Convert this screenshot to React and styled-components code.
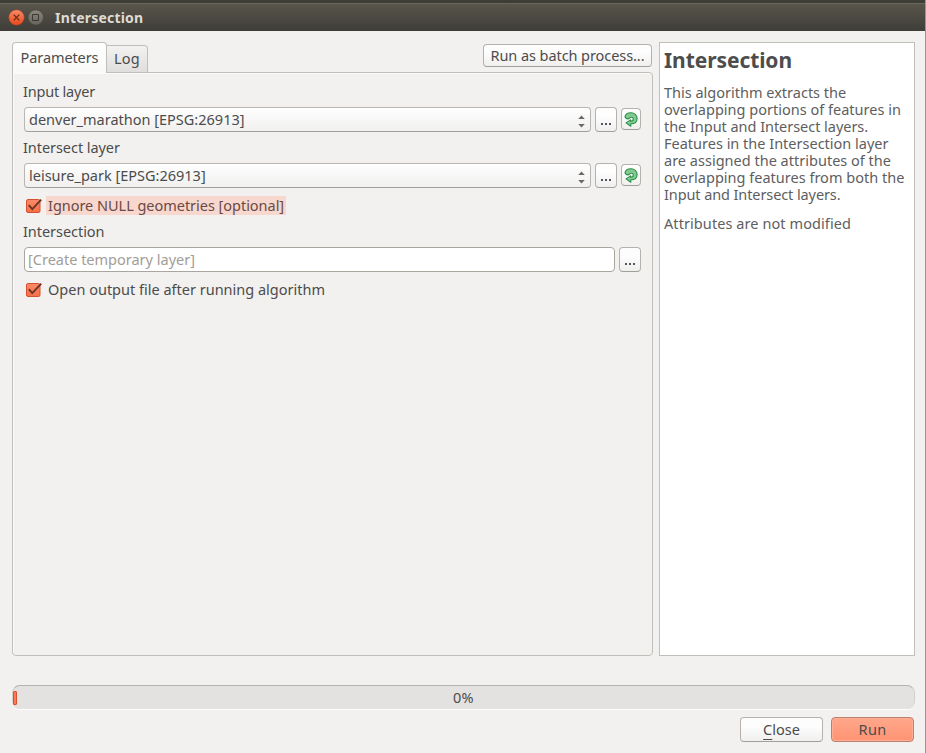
import React from 'react';
import styled, { createGlobalStyle, css } from 'styled-components';

const Global = createGlobalStyle`
  * { box-sizing: border-box; }
  html, body, #root { margin: 0; height: 100%; }
  body {
    overflow: hidden;
    background: #f2f1ef;
    color: #4c4c4c;
    font: 14.5px/20px "Noto Sans", sans-serif;
  }
  p, h2 { margin: 0; }
`;

const Window = styled.div`
  width: 926px;
  height: 753px;
  display: flex;
  flex-direction: column;
  border-right: 1px solid #99958f;
`;

const TitleBar = styled.header`
  height: 31px;
  flex: none;
  display: flex;
  align-items: center;
  padding: 1px 0 0 8px;
  gap: 3px;
  border-top: 3px solid #3d3f37;
  box-shadow: inset 0 1px #6a685c;
  background: linear-gradient(#5a564c, #3e3d38);
  color: #dfdbd2;
`;

const Title = styled.span`
  margin: 0 0 0 7px;
  font-size: 14px;
  font-weight: 700;
  letter-spacing: 0.2px;
`;

const WindowIcon = styled.svg`
  width: 17px;
  height: 17px;
`;

const Body = styled.main`
  flex: 1;
  display: flex;
  flex-direction: column;
  padding: 11px 10px 11px 12px;
`;

const Columns = styled.div`
  height: 614px;
  display: grid;
  grid-template-columns: 641px 256px;
  gap: 6px;
`;

const FormColumn = styled.section`
  display: flex;
  flex-direction: column;
`;

const TabBar = styled.div`
  height: 30px;
  display: flex;
  align-items: flex-end;
`;

const Tab = styled.button`
  width: ${(p) => (p.$active ? 95 : 41)}px;
  height: ${(p) => (p.$active ? 31 : 27)}px;
  padding: 0 0 3px;
  margin-bottom: ${(p) => (p.$active ? -1 : 0)}px;
  position: relative;
  border: 1px solid #c0beba;
  border-bottom: 0;
  border-left-width: ${(p) => (p.$active ? 1 : 0)}px;
  border-radius: ${(p) => (p.$active ? '4px 4px 0 0' : '0 4px 0 0')};
  background: ${(p) => (p.$active ? 'linear-gradient(#fefefe, #f9f9f8)' : 'linear-gradient(#f3f2f1, #e0dedc)')};
  color: inherit;
  font: inherit;
  letter-spacing: ${(p) => (p.$active ? -0.1 : 0.3)}px;
`;

const Button = styled.button`
  width: ${(p) => p.$width}px;
  height: ${(p) => p.$height || 25}px;
  flex: none;
  display: flex;
  align-items: center;
  justify-content: center;
  padding: 0 0 2px;
  margin: ${(p) => p.$margin || 0};
  border: 1px solid #b5b2ae;
  border-bottom-color: #a19f9b;
  border-radius: 4px;
  background: linear-gradient(#fdfdfd 0 35%, #f0efee);
  color: inherit;
  font: inherit;
  letter-spacing: ${(p) => p.$spacing || 0}px;
  ${(p) => p.$primary && css`
    border-color: #b8826f;
    background: linear-gradient(#ffa78b, #ff9373);
    box-shadow: inset 0 0 0 1px #ffad94;
  `}
`;

const IterateButton = styled(Button)`
  padding: 0;
`;

const Mnemonic = styled.span`
  text-decoration: underline;
  text-underline-offset: 4px;
  text-decoration-thickness: 1px;
`;

const Panel = styled.div`
  flex: 1;
  display: flex;
  flex-direction: column;
  padding: 8px 11px 0;
  border: 1px solid #c1bfb9;
  border-radius: 0 4px 4px 4px;
  box-shadow: inset 1px 1px #fbfbfa;
`;

const Label = styled.label`
  height: 26px;
  margin-left: -1px;
  letter-spacing: ${(p) => p.$spacing || 0}px;
`;

const FieldRow = styled.div`
  display: flex;
  gap: 4px;
  height: 25px;
  margin-bottom: ${(p) => p.$after ?? 5}px;
`;

const fieldBox = css`
  flex: 1;
  display: flex;
  align-items: center;
  border-radius: 4px;
`;

const Combo = styled.div`
  ${fieldBox}
  justify-content: space-between;
  padding: 0 4px 2px 4px;
  border: 1px solid #b9b6b2;
  border-bottom-color: #a19f9b;
  background: linear-gradient(#fefefe, #f1f0ef);
`;

const LineEdit = styled.div`
  ${fieldBox}
  padding: 0 3px 2px;
  border: 1px solid #a9a6a0;
  background: #fff;
  color: #a19d98;
`;

const ArrowIcon = styled.svg`
  width: 9px;
  height: 16px;
  margin-top: 5px;
`;

const Dots = styled.span`
  display: flex;
  gap: 2px;
  padding-top: 11px;
  &::before, &::after { content: ''; }
  &::before, &::after, i {
    width: 2px;
    height: 2px;
    background: #55565d;
  }
  i { display: block; }
`;

const CheckRow = styled.label`
  height: 19px;
  display: flex;
  align-items: center;
  gap: 4px;
  margin-bottom: 6px;
`;

const CheckText = styled.span`
  height: 19px;
  padding: 0 2px 0 2px;
  line-height: 19px;
  letter-spacing: ${(p) => (p.$highlight ? -0.03 : 0)}px;
  background: ${(p) => (p.$highlight ? '#f7d7ce' : 'none')};
  color: ${(p) => (p.$highlight ? '#6b4a44' : 'inherit')};
`;

const Help = styled.aside`
  padding: 5px 4px;
  border: 1px solid #c1bfb9;
  background: #fff;
  color: #5e5e60;
  line-height: 17px;
`;

const HelpTitle = styled.h2`
  margin-bottom: 12px;
  color: #4d4d4d;
  font-size: 21px;
  line-height: 24px;
  letter-spacing: -0.08px;
`;

const HelpLine = styled.span`
  display: block;
  white-space: nowrap;
  letter-spacing: ${(p) => p.$spacing || 0}px;
`;

const HelpNote = styled.p`
  margin-top: 12px;
  letter-spacing: 0.08px;
`;

const Progress = styled.div`
  height: 24px;
  flex: none;
  display: grid;
  grid-template-columns: 5px 1fr 5px;
  align-items: center;
  margin-top: 29px;
  border-top: 1px solid #b5b3af;
  border-left: 1px solid #d2d0cd;
  border-right: 1px solid #d2d0cd;
  border-radius: 8px;
  background: #e3e2e0;
  box-shadow: 0 1px #fdfdfd;
  text-align: center;
  letter-spacing: 0.4px;
`;

const ProgressText = styled.span`
  padding-bottom: 2px;
`;

const ProgressChunk = styled.div`
  width: 4px;
  height: 14px;
  margin-top: 1px;
  border: 1px solid #d8512f;
  border-radius: 1px;
  background: #fb7a55;
`;

const Footer = styled.footer`
  display: flex;
  justify-content: flex-end;
  gap: 8px;
  margin: 8px 1px 0 0;
`;

function CloseGlyph() {
  return (
    <WindowIcon viewBox="0 0 17 17">
      <defs>
        <linearGradient id="close" x2="0" y2="1">
          <stop stopColor="#fa8c68" />
          <stop offset="1" stopColor="#e9481b" />
        </linearGradient>
      </defs>
      <circle cx="8.5" cy="8.5" r="7.8" fill="url(#close)" stroke="#8e3a22" strokeWidth=".5" />
      <path d="M5.7 5.7l5.6 5.6m0-5.6l-5.6 5.6" stroke="#5f2918" strokeWidth="1.2" />
    </WindowIcon>
  );
}

function MaximizeGlyph() {
  return (
    <WindowIcon viewBox="0 0 17 17">
      <defs>
        <linearGradient id="max" x2="0" y2="1">
          <stop stopColor="#8b877d" />
          <stop offset="1" stopColor="#66635b" />
        </linearGradient>
      </defs>
      <circle cx="7.8" cy="8.5" r="7.6" fill="url(#max)" stroke="#42413b" strokeWidth=".5" />
      <path d="M4.5 5.5h6v6h-6z" fill="none" stroke="#3b3934" strokeWidth="1" />
    </WindowIcon>
  );
}

function Arrows() {
  return (
    <ArrowIcon viewBox="0 0 9 16" fill="#6c6964">
      <path d="M1.2 6L4.5 2.6 7.8 6zM1.2 11l3.3 3.4L7.8 11z" />
    </ArrowIcon>
  );
}

function Check() {
  return (
    <svg width="18" height="18" viewBox="0 0 18 18">
      <defs>
        <linearGradient id="check" x2="0" y2="1">
          <stop stopColor="#fc8a68" />
          <stop offset="1" stopColor="#f56f48" />
        </linearGradient>
      </defs>
      <rect x="2.5" y="2.5" width="13.5" height="13" rx="1.5" fill="url(#check)" stroke="#d4512f" />
      <path d="M4.8 8.2L8.3 12.2 17.2 2.6" fill="none" stroke="#6b3526" strokeWidth="1.9" />
    </svg>
  );
}

function IterateIcon() {
  return (
    <svg width="14" height="15" viewBox="0 0 14 15">
      <path
        d="M1 4.7C1.5 2.3 4 .8 6.9.8c3.6 0 6.2 2.4 6.2 5.6 0 3.3-2.7 5.4-6.4 5.6l.1 2.2L2 10.9l4.6-3v1.3c1.6 0 2.7-.8 2.7-2.1 0-1-.8-1.8-1.9-1.8-1 0-1.7.6-2 1.3-1.7.7-3.6.1-4.4-1.9z"
        fill="#84c991"
        stroke="#279048"
        strokeWidth="1.1"
        strokeLinejoin="round"
      />
    </svg>
  );
}

function BrowseButton() {
  return (
    <Button $width={22} aria-label="Browse">
      <Dots><i /></Dots>
    </Button>
  );
}

function LayerSelect({ value, after }) {
  return (
    <FieldRow $after={after}>
      <Combo>
        {value}
        <Arrows />
      </Combo>
      <BrowseButton />
      <IterateButton $width={20} $height={22} $margin="1px 0 0" aria-label="Iterate over this layer">
        <IterateIcon />
      </IterateButton>
    </FieldRow>
  );
}

const helpLines = [
  ['This algorithm extracts the', 0],
  ['overlapping portions of features in', 0.01],
  ['the Input and Intersect layers.', -0.04],
  ['Features in the Intersection layer', 0],
  ['are assigned the attributes of the', 0.01],
  ['overlapping features from both the', 0.01],
  ['Input and Intersect layers.', -0.1],
];

export default function App() {
  return (
    <Window>
      <Global />
      <TitleBar>
        <CloseGlyph />
        <MaximizeGlyph />
        <Title>Intersection</Title>
      </TitleBar>
      <Body>
        <Columns>
          <FormColumn>
            <TabBar>
              <Tab $active>Parameters</Tab>
              <Tab>Log</Tab>
              <Button $width={169} $height={23} $spacing={-0.07} $margin="0 1px 5px auto">
                Run as batch process...
              </Button>
            </TabBar>
            <Panel>
              <Label $spacing={-0.2}>Input layer</Label>
              <LayerSelect value="denver_marathon [EPSG:26913]" />
              <Label $spacing={-0.06}>Intersect layer</Label>
              <LayerSelect value="leisure_park [EPSG:26913]" after={8} />
              <CheckRow>
                <Check />
                <CheckText $highlight>Ignore NULL geometries [optional]</CheckText>
              </CheckRow>
              <Label $spacing={-0.05}>Intersection</Label>
              <FieldRow $after={8}>
                <LineEdit>[Create temporary layer]</LineEdit>
                <BrowseButton />
              </FieldRow>
              <CheckRow>
                <Check />
                <CheckText>Open output file after running algorithm</CheckText>
              </CheckRow>
            </Panel>
          </FormColumn>
          <Help>
            <HelpTitle>Intersection</HelpTitle>
            <p>
              {helpLines.map(([text, spacing]) => (
                <HelpLine key={text} $spacing={spacing}>{text}</HelpLine>
              ))}
            </p>
            <HelpNote>Attributes are not modified</HelpNote>
          </Help>
        </Columns>
        <Progress>
          <ProgressChunk />
          <ProgressText>0%</ProgressText>
        </Progress>
        <Footer>
          <Button $width={83}><span><Mnemonic>C</Mnemonic>lose</span></Button>
          <Button $width={83} $primary $spacing={0.3}>Run</Button>
        </Footer>
      </Body>
    </Window>
  );
}
